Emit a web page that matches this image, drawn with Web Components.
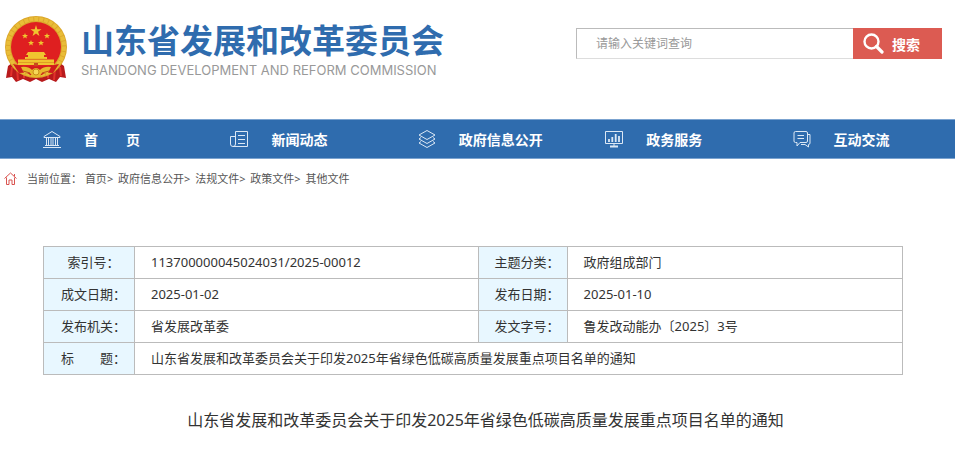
<!DOCTYPE html>
<html lang="zh-CN">
<head>
<meta charset="UTF-8">
<meta name="viewport" content="width=device-width, initial-scale=1">
<title>山东省发展和改革委员会</title>
<style>
  body {
    margin: 0;
    background: #fff;
    color: #333;
    font-family: "Noto Sans", "Noto Sans CJK SC", sans-serif;
    font-size: 13px;
  }
</style>
</head>
<body>
<gov-page>
  <site-header slot="header">
    <site-logo slot="logo"></site-logo>
    <search-box slot="search"></search-box>
  </site-header>
  <nav-bar slot="nav">
    <nav-item icon="home">首　　页</nav-item>
    <nav-item icon="news">新闻动态</nav-item>
    <nav-item icon="layers">政府信息公开</nav-item>
    <nav-item icon="service">政务服务</nav-item>
    <nav-item icon="chat">互动交流</nav-item>
  </nav-bar>
  <bread-crumb slot="crumb"></bread-crumb>
  <info-table></info-table>
  <doc-title>山东省发展和改革委员会关于印发2025年省绿色低碳高质量发展重点项目名单的通知</doc-title>
</gov-page>

<script>
class GovPage extends HTMLElement {
  constructor() {
    super();
    this.attachShadow({ mode: "open" });
    this.shadowRoot.innerHTML = `
      <style>
        :host { display: block; }
        main { padding-top: 48px; }
      </style>
      <slot name="header"></slot>
      <slot name="nav"></slot>
      <slot name="crumb"></slot>
      <main><slot></slot></main>
    `;
  }
}

class SiteHeader extends HTMLElement {
  constructor() {
    super();
    this.attachShadow({ mode: "open" });
    this.shadowRoot.innerHTML = `
      <style>
        :host { display: block; }
        header {
          display: flex;
          justify-content: space-between;
          align-items: flex-start;
          padding: 16px 13px 35px 4px;
        }
        .search {
          flex: 0 1 366px;
          padding-top: 12px;
        }
      </style>
      <header>
        <slot name="logo"></slot>
        <div class="search"><slot name="search"></slot></div>
      </header>
    `;
  }
}

class SiteLogo extends HTMLElement {
  constructor() {
    super();
    this.attachShadow({ mode: "open" });
    this.shadowRoot.innerHTML = `
      <style>
        :host { display: block; }
        a {
          display: flex;
          gap: 13px;
          color: inherit;
          text-decoration: none;
          white-space: nowrap;
        }
        svg { flex: none; width: 64px; height: 68px; }
        .cn {
          display: block;
          color: #2f6cae;
          font-size: 33px;
          font-weight: 700;
          line-height: 50px;
        }
        .en {
          display: block;
          color: #999;
          font-family: Inter, "Noto Sans", sans-serif;
          font-size: 13px;
          line-height: 9px;
        }
      </style>
      <a href="#">
        <svg viewBox="0 0 64 68" aria-hidden="true">
          <path d="M8 47 L4 50 L2 62 L8 61 L12 66 L19 63 L26 66 L32 63 L38 66 L45 63 L52 66 L56 61 L62 62 L60 50 L56 47Z" fill="#b81a1c"/>
          <path d="M8 51 L7 60 M13 53 L14 64 M20 57 L20 62 M44 57 L44 62 M51 53 L50 64 M56 51 L57 60" stroke="#e3312c" stroke-width="2"/>
          <circle cx="32" cy="31" r="31" fill="#dca72a"/>
          <circle cx="32" cy="31" r="28" fill="none" stroke="#e9bd38" stroke-width="4" stroke-dasharray="4 1"/>
          <circle cx="32" cy="31" r="25" fill="#df1f20"/>
          <g fill="#f0c52f">
            <path d="M32 9 L33.300 13.200 H37.500 L34.100 15.700 L35.400 20 L32 17.400 L28.600 20 L29.900 15.700 L26.500 13.200 H30.700Z"/>
            <path d="M21 17 l.8 2 h2.200 l-1.700 1.400 .6 2.100 -1.900-1.200 -1.900 1.200 .6-2.100 -1.700-1.400 h2.200Z"/>
            <path d="M43 17 l.8 2 h2.200 l-1.700 1.400 .6 2.100 -1.900-1.200 -1.900 1.200 .6-2.100 -1.700-1.400 h2.200Z"/>
            <path d="M27 24 l.8 2 h2.200 l-1.700 1.400 .6 2.100 -1.900-1.200 -1.900 1.200 .6-2.100 -1.700-1.400 h2.200Z"/>
            <path d="M37 24 l.8 2 h2.200 l-1.700 1.400 .6 2.100 -1.900-1.200 -1.900 1.200 .6-2.100 -1.700-1.400 h2.200Z"/>
            <path d="M24 36 H40 L42 39 H22Z"/>
            <path d="M24 39 H40 V41 H43 V43 H21 V41 H24Z"/>
            <path d="M14 43.500 H50 V49 H14Z"/>
          </g>
          <path d="M22 43.200 H42 M14 46.500 H50" stroke="#d88b20" stroke-width=".7"/>
          <path d="M30 47 h4 v3 h-4z" fill="#c8491d"/>
          <path d="M9 48 Q32 54 55 48 L49 57 Q40 56 38 59 H26 Q24 56 15 57Z" fill="#cf1c1c"/>
          <path d="M17 51 Q24 50 28 54 Q32 50 36 54 Q40 50 47 51 L44 57 H38 L35 61 H29 L26 57 H20Z" fill="#e8b92d"/>
          <circle cx="32" cy="56" r="3" fill="#f7d757" stroke="#c98c19"/>
          <path d="M19 55 L26 57 M45 55 L38 57" stroke="#bf4e1c"/>
        </svg>
        <span>
          <span class="cn">山东省发展和改革委员会</span>
          <span class="en">SHANDONG DEVELOPMENT AND REFORM COMMISSION</span>
        </span>
      </a>
    `;
  }
}

class SearchBox extends HTMLElement {
  constructor() {
    super();
    this.attachShadow({ mode: "open" });
    this.shadowRoot.innerHTML = `
      <style>
        :host { display: block; }
        form { display: flex; height: 31px; margin: 0; }
        input {
          flex: 1;
          min-width: 0;
          box-sizing: border-box;
          padding: 0 19px;
          border: 1px solid #bbb;
          border-right: 0;
          border-bottom-color: #ddd;
          border-radius: 0;
          outline: none;
          font: inherit;
          font-size: 12px;
        }
        input::placeholder { color: #999; }
        button {
          display: flex;
          align-items: center;
          gap: 8px;
          width: 89px;
          padding: 0 10px;
          border: 0;
          background: #dc5b52;
          color: #fff;
          font: inherit;
          font-size: 14px;
          font-weight: 700;
          white-space: nowrap;
          cursor: pointer;
        }
        svg { flex: none; width: 21px; height: 21px; }
      </style>
      <form>
        <input type="text" placeholder="请输入关键词查询" aria-label="请输入关键词查询">
        <button type="button">
          <svg viewBox="0 0 21 21" fill="none" stroke="#fff" aria-hidden="true">
            <circle cx="8.500" cy="8.500" r="7" stroke-width="2.400"/>
            <path d="M13.500 13.500 L19 19" stroke-width="3.200" stroke-linecap="round"/>
          </svg>
          搜索
        </button>
      </form>
    `;
  }
}

class NavBar extends HTMLElement {
  constructor() {
    super();
    this.attachShadow({ mode: "open" });
    this.shadowRoot.innerHTML = `
      <style>
        :host { display: block; }
        nav {
          display: grid;
          grid-template-columns: repeat(5, 1fr);
          padding: 0 9px;
          border: solid #7ba3d0;
          border-width: 1px 0;
          background: #2f6cae;
        }
      </style>
      <nav><slot></slot></nav>
    `;
  }
}

const navIcons = {
  home: `<path d="M1 6.500 L9 1.500 L17 6.500 V7.500 H1Z M3.500 8 V15 M5.500 8 V15 M8 8 V15 M10 8 V15 M12.500 8 V15 M14.500 8 V15 M2 15.500 H16 M0 17.500 H18"/>`,
  news: `<path d="M5.500 1.500 H17.500 V16.500 H3 Q.5 16.500 .5 14 V6.500 H5.500 M5.500 1.500 V14 Q5.500 16.500 3 16.500 M8 5.500 H15 M8 9.500 H15 M8 13.500 H15"/>`,
  layers: `<path d="M9 .5 L17 5 L9 9.500 L1 5Z M3 7.500 L1 9 L9 13.500 L17 9 L15 7.500 M3 11.500 L1 13 L9 17.500 L17 13 L15 11.500"/>`,
  service: `<path d="M.5 1.500 H17.500 V13.500 H.5Z M9 13.500 V16"/><path d="M4 9 V12 M7.300 7 V12 M10.700 4 V12 M14 6 V12" stroke-width="1.800"/><path d="M5 16.500 H13" stroke-width="2"/>`,
  chat: `<path d="M2.500 1.500 H13 Q14.500 1.500 14.500 3 V11 Q14.500 12.500 13 12.500 H7 L4 16 V12.500 H2.500 Q1 12.500 1 11 V3 Q1 1.500 2.500 1.500Z M4.500 5.500 H11 M4.500 8.500 H11 M15 4.500 H17 V13 Q17 14.500 15.500 14.500 V17 L12 14.500 H8"/>`
};

class NavItem extends HTMLElement {
  constructor() {
    super();
    this.attachShadow({ mode: "open" });
    this.shadowRoot.innerHTML = `
      <style>
        :host { display: block; }
        a {
          display: flex;
          align-items: center;
          gap: 23px;
          height: 38px;
          padding-left: 34px;
          color: #fff;
          font-size: 14px;
          font-weight: 700;
          text-decoration: none;
          white-space: nowrap;
        }
        svg { flex: none; width: 18px; height: 18px; }
      </style>
      <a href="#">
        <svg viewBox="0 0 18 18" fill="none" stroke="#dce8f5" aria-hidden="true">${navIcons[this.getAttribute("icon")]}</svg>
        <slot></slot>
      </a>
    `;
  }
}

class BreadCrumb extends HTMLElement {
  constructor() {
    super();
    this.attachShadow({ mode: "open" });
    this.shadowRoot.innerHTML = `
      <style>
        :host { display: block; }
        nav {
          display: flex;
          align-items: center;
          gap: 10px;
          height: 31px;
          padding: 4px;
          color: #555;
          font-size: 11px;
          line-height: 16px;
        }
        a { color: inherit; text-decoration: none; }
        a + a { margin-left: 2px; }
        svg { flex: none; width: 13px; height: 13px; }
      </style>
      <nav>
        <svg viewBox="0 0 13 13" fill="none" stroke="#d9534f" aria-hidden="true">
          <path d="M.5 6.500 L6.500 1 L12.500 6.500 M2.500 5.500 V12.500 H5 V8 H8 V12.500 H10.500 V5.500 M10.500 2 V4"/>
        </svg>
        <div>当前位置： <a href="#">首页</a>&gt; <a href="#">政府信息公开</a>&gt; <a href="#">法规文件</a>&gt; <a href="#">政策文件</a>&gt; <a href="#">其他文件</a></div>
      </nav>
    `;
  }
}

class InfoTable extends HTMLElement {
  constructor() {
    super();
    this.attachShadow({ mode: "open" });
    this.shadowRoot.innerHTML = `
      <style>
        :host { display: block; padding: 0 52px 0 43px; }
        table {
          width: 100%;
          border-collapse: collapse;
          table-layout: fixed;
          font-size: 13px;
          line-height: 19px;
        }
        .label { width: 91px; }
        .wide { width: 40%; }
        .label2 { width: 89px; }
        th, td {
          padding: 6px 0;
          border: 1px solid #bbb;
          font-weight: 400;
        }
        th {
          padding-left: 9px;
          background: #e8f7ff;
          text-align: center;
        }
        td {
          padding-left: 16px;
          text-align: left;
        }
      </style>
      <table>
        <colgroup><col class="label"><col class="wide"><col class="label2"><col></colgroup>
        <tr>
          <th scope="row">索引号：</th><td>113700000045024031/2025-00012</td>
          <th scope="row">主题分类：</th><td>政府组成部门</td>
        </tr>
        <tr>
          <th scope="row">成文日期：</th><td>2025-01-02</td>
          <th scope="row">发布日期：</th><td>2025-01-10</td>
        </tr>
        <tr>
          <th scope="row">发布机关：</th><td>省发展改革委</td>
          <th scope="row">发文字号：</th><td>鲁发改动能办〔2025〕3号</td>
        </tr>
        <tr>
          <th scope="row">标　　题：</th>
          <td colspan="3">山东省发展和改革委员会关于印发2025年省绿色低碳高质量发展重点项目名单的通知</td>
        </tr>
      </table>
    `;
  }
}

class DocTitle extends HTMLElement {
  constructor() {
    super();
    this.attachShadow({ mode: "open" });
    this.shadowRoot.innerHTML = `
      <style>
        :host { display: block; padding: 32px 0 16px 16px; }
        h1 {
          margin: 0;
          font-size: 16px;
          font-weight: 400;
          line-height: 26px;
          text-align: center;
        }
      </style>
      <h1><slot></slot></h1>
    `;
  }
}

customElements.define("gov-page", GovPage);
customElements.define("site-header", SiteHeader);
customElements.define("site-logo", SiteLogo);
customElements.define("search-box", SearchBox);
customElements.define("nav-bar", NavBar);
customElements.define("nav-item", NavItem);
customElements.define("bread-crumb", BreadCrumb);
customElements.define("info-table", InfoTable);
customElements.define("doc-title", DocTitle);
</script>
</body>
</html>
